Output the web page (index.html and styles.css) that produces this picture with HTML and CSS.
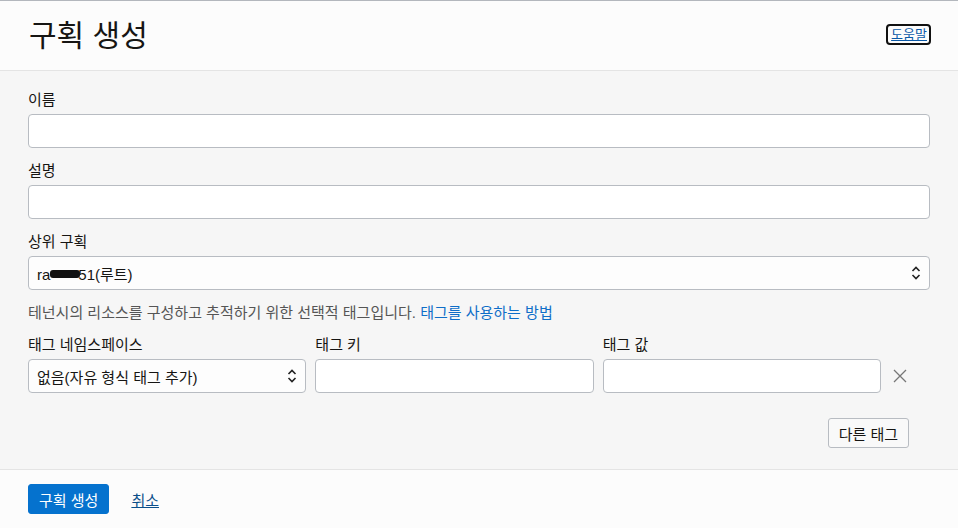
FILE: index.html
```html
<!DOCTYPE html>
<html lang="ko">
<head>
    <meta charset="UTF-8">
    <meta name="viewport" content="width=device-width, initial-scale=1.0">
    <title>구획 생성</title>
    <link rel="stylesheet" href="styles.css">
</head>
<body>

<div class="panel">
    <header class="panel-header">
        <h1>구획 생성</h1>
        <a class="help-link" href="#help">도움말</a>
    </header>

    <main class="panel-body">
        <div class="field">
            <label>이름</label>
            <div class="input"></div>
        </div>

        <div class="field">
            <label>설명</label>
            <div class="input"></div>
        </div>

        <div class="field">
            <label>상위 구획</label>
            <div class="input select">
                <span>ra<span class="redacted"></span>51(루트)</span>
                <svg width="10" height="14" viewBox="0 0 10 14">
                    <path d="M1.5 5 L5 1.5 L8.5 5 M1.5 9 L5 12.5 L8.5 9" fill="none" stroke="#222" stroke-width="1.6"/>
                </svg>
            </div>
        </div>

        <p class="hint">테넌시의 리소스를 구성하고 추적하기 위한 선택적 태그입니다. <a href="#tags">태그를 사용하는 방법</a></p>

        <div class="tag-grid">
            <label>태그 네임스페이스</label>
            <label>태그 키</label>
            <label>태그 값</label>
            <span></span>

            <div class="input select">
                <span>없음(자유 형식 태그 추가)</span>
                <svg width="10" height="14" viewBox="0 0 10 14">
                    <path d="M1.5 5 L5 1.5 L8.5 5 M1.5 9 L5 12.5 L8.5 9" fill="none" stroke="#222" stroke-width="1.6"/>
                </svg>
            </div>
            <div class="input"></div>
            <div class="input"></div>
            <button class="remove-tag" aria-label="삭제">
                <svg width="14" height="14" viewBox="0 0 14 14">
                    <path d="M1 1 L13 13 M13 1 L1 13" fill="none" stroke="#777" stroke-width="1.3"/>
                </svg>
            </button>
        </div>

        <div class="tag-actions">
            <button class="btn">다른 태그</button>
        </div>
    </main>

    <footer class="panel-footer">
        <button class="btn btn-primary">구획 생성</button>
        <a class="cancel-link" href="#cancel">취소</a>
    </footer>
</div>

</body>
</html>
```

FILE: styles.css
```css
body {
    margin: 0;
    padding: 0;
    font-family: "Liberation Sans", "Noto Sans CJK KR", Arial, sans-serif;
    font-size: 15px;
    color: #161513;
    background-color: #f6f6f6;
}

.panel {
    display: flex;
    flex-direction: column;
    height: 528px;
    border-top: 1px solid #b3b7bd;
    box-sizing: border-box;
}

.panel-header {
    display: flex;
    align-items: center;
    justify-content: space-between;
    height: 69px;
    padding: 0 27px 0 29px;
    background-color: #fcfcfc;
    border-bottom: 1px solid #e4e4e4;
}

.panel-header h1 {
    margin: 0;
    font-size: 30px;
    font-weight: normal;
    color: #161513;
    position: relative;
    top: -3px;
}

.help-link {
    color: #0b5aa8;
    font-size: 13px;
    line-height: 17px;
    padding: 0 2px 0 3px;
    border: 2px solid #111;
    border-radius: 4px;
    position: relative;
    top: -1px;
}

.panel-body {
    flex: 1;
    padding: 19px 28px 0 28px;
    background-color: #f6f6f6;
}

.field {
    margin-bottom: 13px;
}

label {
    display: block;
    line-height: 20px;
    margin-bottom: 4px;
}

.input {
    height: 34px;
    box-sizing: border-box;
    background-color: #fff;
    border: 1px solid #b8bcc2;
    border-radius: 4px;
}

.select {
    display: flex;
    align-items: center;
    justify-content: space-between;
    padding: 0 8px 0 8px;
    background-color: #fdfdfd;
}

.redacted {
    display: inline-block;
    width: 30px;
    height: 8px;
    background-color: #111;
    border-radius: 3px;
    vertical-align: 2px;
    margin-right: -2px;
}

.hint {
    margin: 0 0 12px 0;
    line-height: 20px;
    color: #555;
}

.hint a {
    color: #0f6ec8;
    text-decoration: none;
}

.tag-grid {
    display: grid;
    grid-template-columns: 1fr 1fr 1fr 40px;
    column-gap: 9px;
}

.remove-tag {
    justify-self: start;
    align-self: center;
    margin-left: 3px;
    padding: 0;
    background: none;
    border: none;
    display: flex;
}

.tag-actions {
    display: flex;
    justify-content: flex-end;
    padding: 25px 21px 0 0;
}

.btn {
    font-family: inherit;
    font-size: 15px;
    color: #161513;
    height: 30px;
    padding: 0 10px;
    background-color: #f9f9f9;
    border: 1px solid #b8bcc2;
    border-radius: 3px;
}

.panel-footer {
    display: flex;
    align-items: center;
    gap: 22px;
    height: 58px;
    padding: 0 28px;
    background-color: #fcfcfc;
    border-top: 1px solid #e4e4e4;
}

.btn-primary {
    color: #fff;
    background-color: #0572ce;
    border-color: #0572ce;
}

.cancel-link {
    color: #0b4f8a;
    text-decoration: underline;
}
```
